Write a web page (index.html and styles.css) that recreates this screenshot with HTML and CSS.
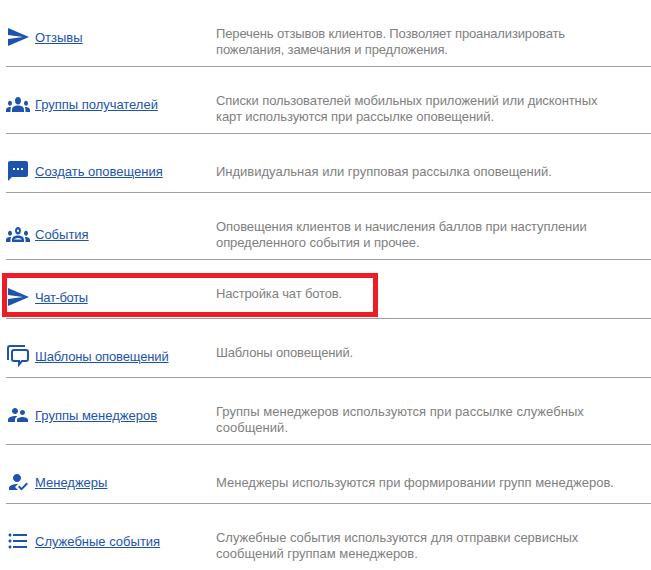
FILE: index.html
```html
<!DOCTYPE html>
<html lang="ru">
<head>
<meta charset="utf-8">
<title>Оповещения</title>
<link rel="stylesheet" href="styles.css">
</head>
<body>
<main class="list">
  <section class="row tall">
    <div class="name"><svg class="icon" viewBox="0 0 24 24"><path d="M2.01 21L23 12 2.01 3 2 10l15 2-15 2z"/></svg><a href="#">Отзывы</a></div>
    <p class="desc tight-l">Перечень отзывов клиентов. Позволяет проанализировать<br>пожелания, замечания и предложения.</p>
  </section>
  <section class="row tall">
    <div class="name"><svg class="icon" viewBox="0 0 24 24"><path transform="translate(0 -2.5) scale(1 1.25)" d="M12 12.75c1.63 0 3.07.39 4.24.9 1.08.48 1.76 1.56 1.76 2.73V18H6v-1.61c0-1.18.68-2.26 1.76-2.73 1.17-.52 2.61-.91 4.24-.91zM4 13c1.1 0 2-.9 2-2s-.9-2-2-2-2 .9-2 2 .9 2 2 2zm1.13 1.1c-.37-.06-.74-.1-1.13-.1-.99 0-1.93.21-2.78.58C.48 14.9 0 15.62 0 16.43V18h4.5v-1.61c0-.83.23-1.61.63-2.29zM20 13c1.1 0 2-.9 2-2s-.9-2-2-2-2 .9-2 2 .9 2 2 2zm4 3.43c0-.81-.48-1.53-1.22-1.85-.85-.37-1.79-.58-2.78-.58-.39 0-.76.04-1.13.1.4.68.63 1.46.63 2.29V18H24v-1.57zM12 6c1.66 0 3 1.34 3 3s-1.34 3-3 3-3-1.34-3-3 1.34-3 3-3z"/></svg><a href="#" class="tight-s">Группы получателей</a></div>
    <p class="desc tight-m">Списки пользователей мобильных приложений или дисконтных<br>карт используются при рассылке оповещений.</p>
  </section>
  <section class="row short">
    <div class="name"><svg class="icon" viewBox="0 0 24 24"><path d="M20 2H4c-1.1 0-1.99.9-1.99 2L2 22l4-4h14c1.1 0 2-.9 2-2V4c0-1.1-.9-2-2-2zM9 11H7V9h2v2zm4 0h-2V9h2v2zm4 0h-2V9h2v2z"/></svg><a href="#">Создать оповещения</a></div>
    <p class="desc desc-low">Индивидуальная или групповая рассылка оповещений.</p>
  </section>
  <section class="row tall">
    <div class="name name-low"><svg class="icon" viewBox="0 0 24 24"><path transform="translate(0 -2.5) scale(1 1.25)" d="M4 13c1.1 0 2-.9 2-2s-.9-2-2-2-2 .9-2 2 .9 2 2 2zm1.13 1.1c-.37-.06-.74-.1-1.13-.1-.99 0-1.93.21-2.78.58C.48 14.9 0 15.62 0 16.43V18h4.5v-1.61c0-.83.23-1.61.63-2.29zM20 13c1.1 0 2-.9 2-2s-.9-2-2-2-2 .9-2 2 .9 2 2 2zm4 3.43c0-.81-.48-1.53-1.22-1.85-.85-.37-1.79-.58-2.78-.58-.39 0-.76.04-1.13.1.4.68.63 1.46.63 2.29V18H24v-1.57zm-7.76-2.78C15.07 13.13 13.63 12.75 12 12.75c-1.63 0-3.07.39-4.24.9C6.68 14.13 6 15.21 6 16.39V18h12v-1.61c0-1.18-.68-2.26-1.76-2.74zM8.07 16c.09-.23.13-.39.91-.69.97-.38 1.99-.56 3.02-.56s2.05.18 3.02.56c.77.3.81.46.91.69H8.07zM12 8c.55 0 1 .45 1 1s-.45 1-1 1-1-.45-1-1 .45-1 1-1m0-2c-1.66 0-3 1.34-3 3s1.34 3 3 3 3-1.34 3-3-1.34-3-3-3z"/></svg><a href="#">События</a></div>
    <p class="desc tight-m">Оповещения клиентов и начисления баллов при наступлении<br>определенного события и прочее.</p>
  </section>
  <section class="row short">
    <div class="name"><svg class="icon" viewBox="0 0 24 24"><path d="M2.01 21L23 12 2.01 3 2 10l15 2-15 2z"/></svg><a href="#" class="tight-xl">Чат-боты</a></div>
    <p class="desc tight-l">Настройка чат ботов.</p>
    <div class="highlight"></div>
  </section>
  <section class="row short">
    <div class="name"><svg class="icon" viewBox="0 0 24 24"><path class="outline" d="M19 2H4a2 2 0 0 0-2 2v12"/><path class="outline" d="M8 6h12a2 2 0 0 1 2 2v7a2 2 0 0 1-2 2h-4l-3 3.500V17H8a2 2 0 0 1-2-2V8a2 2 0 0 1 2-2z"/></svg><a href="#" class="tight-l">Шаблоны оповещений</a></div>
    <p class="desc tight-l">Шаблоны оповещений.</p>
  </section>
  <section class="row tall">
    <div class="name"><svg class="icon" viewBox="0 0 24 24"><path d="M16.500 12c1.380 0 2.490-1.120 2.490-2.500S17.880 7 16.500 7C15.120 7 14 8.120 14 9.500s1.120 2.500 2.500 2.500zM9 11c1.660 0 2.990-1.340 2.990-3S10.660 5 9 5C7.340 5 6 6.340 6 8s1.340 3 3 3zm7.500 3c-1.830 0-5.500.92-5.500 2.750V19h11v-2.250c0-1.830-3.670-2.750-5.500-2.750zM9 13c-2.330 0-7 1.170-7 3.500V19h7v-2.250c0-.85.33-2.340 2.370-3.470C10.500 13.100 9.660 13 9 13z"/></svg><a href="#">Группы менеджеров</a></div>
    <p class="desc loose">Группы менеджеров используются при рассылке служебных<br>сообщений.</p>
  </section>
  <section class="row short">
    <div class="name"><svg class="icon" viewBox="0 0 24 24"><path d="M9 17l3-2.940c-.39-.04-.68-.06-1-.06-2.670 0-8 1.340-8 4v2h9l-3-3zm2-5c2.210 0 4-1.790 4-4s-1.790-4-4-4-4 1.790-4 4 1.790 4 4 4"/><path d="M15.470 20.500L12 17l1.400-1.410 2.070 2.080 5.130-5.170 1.400 1.410z"/></svg><a href="#">Менеджеры</a></div>
    <p class="desc desc-low">Менеджеры используются при формировании групп менеджеров.</p>
  </section>
  <section class="row tall last">
    <div class="name"><svg class="icon" viewBox="0 0 24 24"><path d="M4 10.500c-.83 0-1.500.67-1.500 1.500s.67 1.500 1.500 1.500 1.500-.67 1.500-1.500-.67-1.500-1.500-1.500zm0-6c-.83 0-1.500.67-1.500 1.500S3.170 7.500 4 7.500 5.500 6.830 5.500 6 4.830 4.500 4 4.500zm0 12c-.83 0-1.500.68-1.500 1.500s.68 1.500 1.500 1.500 1.500-.68 1.500-1.500-.67-1.500-1.500-1.500zM7 19h14v-2H7v2zm0-6h14v-2H7v2zm0-8v2h14V5H7z"/></svg><a href="#">Служебные события</a></div>
    <p class="desc tight-s">Служебные события используются для отправки сервисных<br>сообщений группам менеджеров.</p>
  </section>
</main>
</body>
</html>
```
FILE: styles.css
```css
html, body {
  margin: 0;
  padding: 0;
  background: #fff;
}
body {
  height: 570px;
  overflow: hidden;
  font-family: "Liberation Sans", Arial, sans-serif;
  font-size: 13px;
  line-height: 16px;
}
.list {
  padding-left: 6px;
}
.row {
  position: relative;
  display: flex;
  align-items: flex-start;
  box-sizing: border-box;
  border-bottom: 1px solid #a0a0a0;
}
.tall { height: 67px; }
.short { height: 59px; }
.last { border-bottom: 0; }
.name {
  display: flex;
  align-items: center;
  width: 210px;
  height: 24px;
  margin-top: 25px;
  flex: none;
}
.name-low { margin-top: 29px; }
.icon {
  width: 24px;
  height: 24px;
  margin-right: 5px;
  flex: none;
  fill: #1c54ad;
}
.outline {
  fill: none;
  stroke: #1c54ad;
  stroke-width: 2;
}
a {
  margin-top: 2px;
  color: #1c54ad;
  text-decoration: underline;
}
.desc {
  margin: 26px 0 0;
  color: #808080;
}
.desc-low { margin-top: 30px; }
.tight-xl { letter-spacing: -0.35px; }
.tight-l { letter-spacing: -0.14px; }
.tight-m { letter-spacing: -0.08px; }
.tight-s { letter-spacing: -0.03px; }
.loose { letter-spacing: 0.04px; }
.highlight {
  position: absolute;
  left: -4px;
  top: 13px;
  width: 376px;
  height: 44px;
  box-sizing: border-box;
  border: 5px solid #ee1c25;
}
```
